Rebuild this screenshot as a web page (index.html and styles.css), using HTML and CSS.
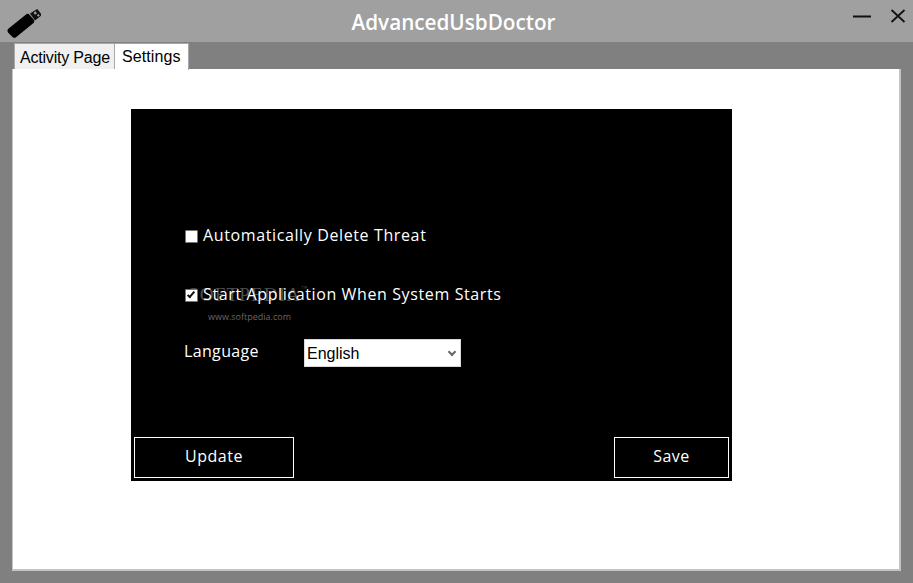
FILE: index.html
```html
<!DOCTYPE html>
<html lang="en">
<head>
<meta charset="utf-8">
<title>AdvancedUsbDoctor</title>
<link rel="stylesheet" href="styles.css">
</head>
<body>
<div class="window">
  <header class="titlebar">
    <svg class="logo" width="40" height="38" viewBox="0 0 40 38" aria-hidden="true">
      <path d="M7 27 L25 12.5 Q27 11 28.5 12.8 L33 18 Q34 19.5 32.5 21 L15 35.2 Q13.3 36.5 11.8 35.2 L7 30.5 Q5.8 28.5 7 27 Z" fill="#000"/>
      <path d="M29 11.5 L36.2 7 L41 13 L34 18.5 Z" fill="#111"/>
      <rect x="33" y="10" width="2.4" height="2.4" fill="#a0a0a0" transform="rotate(-38 34 11)"/>
      <rect x="36" y="12.5" width="2" height="2" fill="#a0a0a0" transform="rotate(-38 37 13)"/>
    </svg>
    <h1 class="title">AdvancedUsbDoctor</h1>
    <div class="controls">
      <svg width="18" height="3" viewBox="0 0 18 3" aria-hidden="true"><rect width="18" height="2" y="0.5" fill="#111"/></svg>
      <svg width="16" height="14" viewBox="0 0 16 14" aria-hidden="true"><path d="M1.5 1 L14.5 13 M14.5 1 L1.5 13" stroke="#111" stroke-width="1.8" fill="none"/></svg>
    </div>
  </header>
  <main class="content">
    <nav class="tabs">
      <div class="tab">Activity Page</div>
      <div class="tab tab-active">Settings</div>
    </nav>
    <section class="tabpanel">
      <div class="settings">
        <div class="options">
          <label class="option"><input class="check" type="checkbox"><span>Automatically Delete Threat</span></label>
          <label class="option option-second"><input class="check" type="checkbox" checked><span>Start Application When System Starts</span></label>
          <div class="language">
            <span class="language-label">Language</span>
            <div class="select-wrap">
              <select class="language-select"><option>English</option></select>
            </div>
          </div>
        </div>
        <div class="actions">
          <button class="btn btn-update">Update</button>
          <button class="btn btn-save">Save</button>
        </div>
        <div class="watermark">
          <div class="wm-name">SOFTPEDIA<sup class="wm-tm">™</sup></div>
          <div class="wm-url">www.softpedia.com</div>
        </div>
      </div>
    </section>
  </main>
</div>
</body>
</html>
```
FILE: styles.css
```css
html, body {
  margin: 0;
  padding: 0;
}
body {
  width: 913px;
  height: 583px;
  overflow: hidden;
  background: #808080;
}
.window {
  display: flex;
  flex-direction: column;
  height: 583px;
}
.titlebar {
  display: flex;
  align-items: center;
  justify-content: center;
  position: relative;
  height: 42px;
  flex: none;
  background: #a0a0a0;
}
.logo {
  position: absolute;
  left: 1px;
  top: 2px;
}
.title {
  margin: 0;
  font: 600 20.7px/1 "Open Sans", sans-serif;
  color: #fff;
  position: relative;
  left: -3px;
  top: 1px;
}
.controls {
  position: absolute;
  right: 7px;
  top: 9px;
  display: flex;
  align-items: center;
  gap: 19px;
}
.content {
  flex: 1;
  display: flex;
  flex-direction: column;
  padding: 0 12px 12px;
}
.tabs {
  display: flex;
  align-items: flex-end;
  height: 27px;
  padding-left: 2px;
  flex: none;
}
.tab {
  width: 101px;
  height: 26px;
  box-sizing: border-box;
  padding: 4px 0 0 5px;
  background: #f0f0f0;
  border: 1px solid #a8a8a8;
  border-bottom: 0;
  font: 16px/20px "Liberation Sans", sans-serif;
  letter-spacing: -0.2px;
  color: #000;
}
.tab-active {
  width: 74px;
  height: 27px;
  padding: 3px 0 0 7px;
  background: #fff;
  border-left: 0;
  margin-bottom: -1px;
  position: relative;
  letter-spacing: 0.1px;
}
.tabpanel {
  flex: 1;
  background: #fff;
  border-left: 1px solid #c4c4c4;
  border-right: 2px solid #c4c4c4;
  border-bottom: 2px solid #c4c4c4;
  padding: 40px 0 0 118px;
}
.settings {
  position: relative;
  display: flex;
  flex-direction: column;
  justify-content: space-between;
  box-sizing: border-box;
  width: 601px;
  height: 372px;
  padding: 0 3px 3px;
  background: #000;
  color: #fff;
}
.options {
  display: flex;
  flex-direction: column;
  padding: 116px 0 0 51px;
}
.option {
  display: flex;
  align-items: center;
  gap: 5px;
  height: 20px;
  font: 500 16px/20px "Open Sans", sans-serif;
  letter-spacing: 0.62px;
  position: relative;
  z-index: 1;
}
.option-second {
  margin-top: 39px;
}
.check {
  appearance: none;
  width: 13px;
  height: 13px;
  margin: 2px 0 0;
  position: relative;
  flex: none;
  background: #fff;
  border: 1px solid #767676;
  box-sizing: border-box;
  border-radius: 1px;
}
.check:checked::after {
  content: "";
  position: absolute;
  left: 3px;
  top: 0;
  width: 4px;
  height: 8px;
  border: solid #111;
  border-width: 0 2px 2px 0;
  box-sizing: border-box;
  transform: rotate(40deg);
}
.language {
  display: flex;
  align-items: center;
  margin: 35px 0 0 -1px;
  height: 28px;
}
.language-label {
  width: 120px;
  margin-bottom: 4px;
  font: 500 16px/20px "Open Sans", sans-serif;
  letter-spacing: 0.35px;
}
.select-wrap {
  position: relative;
  width: 157px;
  height: 28px;
}
.select-wrap::after {
  content: "";
  position: absolute;
  right: 6px;
  top: 10px;
  width: 6px;
  height: 6px;
  border: solid #666;
  border-width: 0 2px 2px 0;
  box-sizing: border-box;
  transform: rotate(45deg);
  pointer-events: none;
}
.language-select {
  appearance: none;
  display: block;
  width: 100%;
  height: 100%;
  box-sizing: border-box;
  padding: 0 0 0 2px;
  border: 1px solid #d8d8d8;
  border-radius: 0;
  background: #fff;
  font: 16px "Liberation Sans", sans-serif;
  color: #000;
}
.actions {
  display: flex;
  justify-content: space-between;
}
.btn {
  height: 41px;
  background: #000;
  border: 1px solid #fff;
  color: #fff;
  font: 500 16px/1 "Open Sans", sans-serif;
  letter-spacing: 0.5px;
  padding: 0 0 3px;
}
.btn-update {
  width: 160px;
}
.btn-save {
  width: 115px;
}
.watermark {
  position: absolute;
  left: 57px;
  top: 176px;
  pointer-events: none;
}
.wm-name {
  font: 19px/20px "Liberation Serif", serif;
  letter-spacing: 1.2px;
  color: #4e4e4e;
}
.wm-tm {
  font-size: 6px;
  line-height: 6px;
  vertical-align: top;
}
.wm-url {
  margin: 6px 0 0 20px;
  font: 9px/12px "Open Sans", sans-serif;
  color: #666;
}
```
